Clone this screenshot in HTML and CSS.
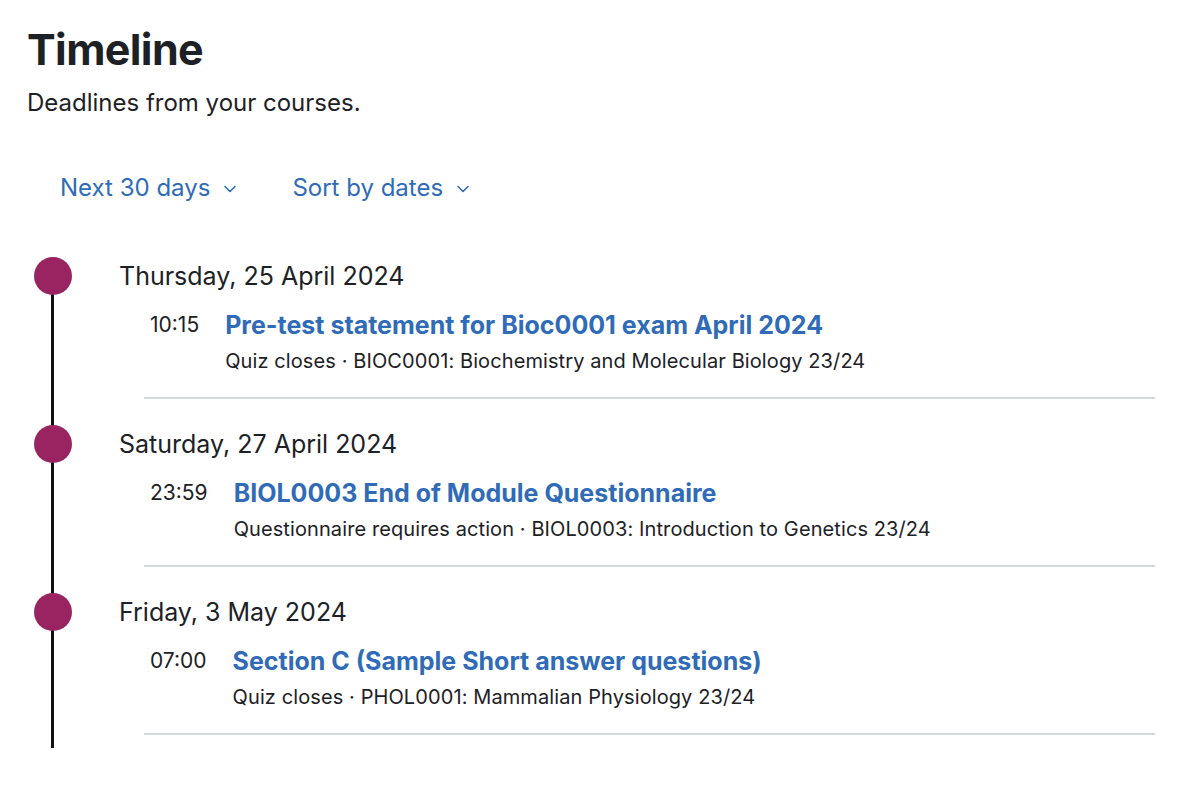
FILE: index.html
```html
<!DOCTYPE html>
<html lang="en">
<head>
    <meta charset="UTF-8">
    <title>Timeline</title>
    <link rel="stylesheet" href="styles.css">
</head>
<body>
    <div class="page">
        <h1 class="page-title">Timeline</h1>
        <p class="page-desc">Deadlines from your courses.</p>

        <!-- filters -->
        <div class="filters">
            <button class="filter-btn">Next 30 days
                <svg class="chevron" viewBox="0 0 12 8" width="12" height="8"><path d="M1 1.5 L6 6.5 L11 1.5" fill="none" stroke="currentColor" stroke-width="1.6" stroke-linecap="round" stroke-linejoin="round"/></svg>
            </button>
            <button class="filter-btn">Sort by dates
                <svg class="chevron" viewBox="0 0 12 8" width="12" height="8"><path d="M1 1.5 L6 6.5 L11 1.5" fill="none" stroke="currentColor" stroke-width="1.6" stroke-linecap="round" stroke-linejoin="round"/></svg>
            </button>
        </div>

        <!-- timeline -->
        <div class="timeline">
            <div class="day">
                <span class="dot"></span>
                <div class="day-body">
                    <h3 class="day-date">Thursday, 25 April 2024</h3>
                    <div class="event">
                        <span class="event-time">10:15</span>
                        <div class="event-info">
                            <a class="event-name" href="#">Pre-test statement for Bioc0001 exam April 2024</a>
                            <div class="event-meta">Quiz closes · BIOC0001: Biochemistry and Molecular Biology 23/24</div>
                        </div>
                    </div>
                </div>
            </div>

            <div class="day">
                <span class="dot"></span>
                <div class="day-body">
                    <h3 class="day-date">Saturday, 27 April 2024</h3>
                    <div class="event">
                        <span class="event-time">23:59</span>
                        <div class="event-info">
                            <a class="event-name" href="#">BIOL0003 End of Module Questionnaire</a>
                            <div class="event-meta">Questionnaire requires action · BIOL0003: Introduction to Genetics 23/24</div>
                        </div>
                    </div>
                </div>
            </div>

            <div class="day">
                <span class="dot"></span>
                <div class="day-body">
                    <h3 class="day-date">Friday, 3 May 2024</h3>
                    <div class="event">
                        <span class="event-time">07:00</span>
                        <div class="event-info">
                            <a class="event-name" href="#">Section C (Sample Short answer questions)</a>
                            <div class="event-meta">Quiz closes · PHOL0001: Mammalian Physiology 23/24</div>
                        </div>
                    </div>
                </div>
            </div>
        </div>
    </div>
</body>
</html>
```

FILE: styles.css
```css
:root {
    --text-color: #1d2125;
    --link-color: #2f6bb7;
    --dot-color: #9a2461;
    --line-color: #d5d9dc;
}

body {
    margin: 0;
    background: #fff;
    color: var(--text-color);
    font-family: Inter, 'Liberation Sans', Arial, sans-serif;
}

.page {
    padding: 22px 0 0 27px;
    width: 1128px;
}

/* header */
.page-title {
    margin: 0;
    font-size: 43px;
    line-height: 54px;
    font-weight: 700;
    letter-spacing: -0.6px;
}

.page-desc {
    margin: 12px 0 0;
    font-size: 24px;
    line-height: 30px;
}

/* filters */
.filters {
    display: flex;
    gap: 56px;
    margin: 54px 0 0 33px;
}

.filter-btn {
    display: flex;
    align-items: center;
    gap: 14px;
    padding: 0;
    border: none;
    background: none;
    color: var(--link-color);
    font-family: inherit;
    font-size: 24px;
    line-height: 32px;
    cursor: pointer;
}

.chevron {
    margin-top: 2px;
}

/* timeline */
.timeline {
    position: relative;
    margin: 53px 0 0 7px;
    padding-bottom: 13px;
}

    .timeline::before {
        content: "";
        position: absolute;
        left: 17px;
        top: 19px;
        bottom: 0;
        width: 3px;
        background: #111;
    }

.day {
    display: grid;
    grid-template-columns: 38px 1fr;
    gap: 47px;
    margin-bottom: 26px;
}

    .day:last-child {
        margin-bottom: 0;
    }

.dot {
    position: relative;
    width: 38px;
    height: 38px;
    border-radius: 50%;
    background: var(--dot-color);
}

.day-date {
    margin: 0;
    font-size: 25px;
    line-height: 38px;
    font-weight: 400;
}

.event {
    display: flex;
    gap: 26px;
    margin: 14px 0 0 25px;
    padding: 0 0 22px 6px;
    border-bottom: 2px solid var(--line-color);
}

.event-time {
    font-size: 21px;
    line-height: 32px;
}

.event-name {
    display: block;
    color: var(--link-color);
    font-size: 25px;
    line-height: 32px;
    font-weight: 700;
    text-decoration: none;
}

.event-meta {
    margin-top: 6px;
    font-size: 20px;
    line-height: 28px;
    letter-spacing: 0.1px;
}
```
